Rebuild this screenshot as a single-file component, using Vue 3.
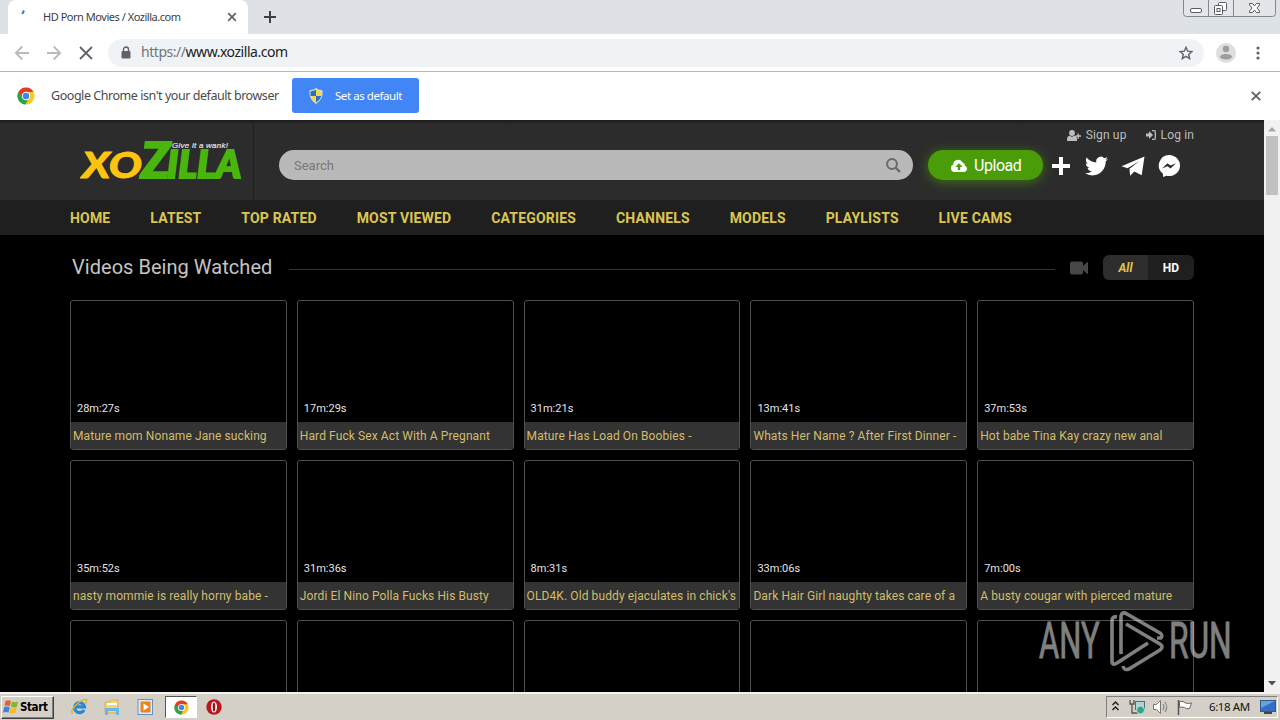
<script setup>
const nav = ['HOME', 'LATEST', 'TOP RATED', 'MOST VIEWED', 'CATEGORIES', 'CHANNELS', 'MODELS', 'PLAYLISTS', 'LIVE CAMS']
const videos = [
  { time: '28m:27s', title: 'Mature mom Noname Jane sucking' },
  { time: '17m:29s', title: 'Hard Fuck Sex Act With A Pregnant' },
  { time: '31m:21s', title: 'Mature Has Load On Boobies -' },
  { time: '13m:41s', title: 'Whats Her Name ? After First Dinner -' },
  { time: '37m:53s', title: 'Hot babe Tina Kay crazy new anal' },
  { time: '35m:52s', title: 'nasty mommie is really horny babe -' },
  { time: '31m:36s', title: 'Jordi El Nino Polla Fucks His Busty' },
  { time: '8m:31s', title: "OLD4K. Old buddy ejaculates in chick's" },
  { time: '33m:06s', title: 'Dark Hair Girl naughty takes care of a' },
  { time: '7m:00s', title: 'A busty cougar with pierced mature' },
  {}, {}, {}, {}, {},
]
</script>

<template>
  <div class="screen">
    <div class="strip">
      <div class="tab">
        <svg class="spin" width="16" height="16" viewBox="0 0 16 16"><path d="M6.300 6L8 2.500" stroke="#3b78d8" stroke-width="2" /></svg>
        <span class="tabtitle">HD Porn Movies / Xozilla.com</span>
        <svg class="tabx" width="10" height="10" viewBox="0 0 10 10"><path d="M1.2 1.2l7.6 7.6M8.8 1.2L1.2 8.8" stroke="#5f6368" stroke-width="1.7" /></svg>
      </div>
      <svg class="plus" width="12" height="12" viewBox="0 0 12 12"><path d="M6 0v12M0 6h12" stroke="#3c4043" stroke-width="2" /></svg>
      <svg class="winbtns" width="94" height="18" viewBox="0 0 94 18">
        <path d="M.5 -1V13.5Q.5 16.5 3.500 16.500H89.500Q92.500 16.500 92.500 13.500V-1M25.500 0V16.500M50.500 0V16.500" fill="#e3e5e9" stroke="#83878e" />
        <rect x="7.500" y="8.500" width="11" height="4" rx="1.500" fill="#fff" stroke="#555a64" />
        <rect x="35.500" y="2.500" width="8" height="8" rx="1" fill="#fff" stroke="#555a64" />
        <rect x="31.500" y="5.500" width="8" height="9" rx="1" fill="#fff" stroke="#555a64" />
        <rect x="34" y="8.500" width="3" height="3" fill="none" stroke="#555a64" />
        <path d="M66.500 3.500h3l2 2.500 2-2.500h3v1.500L74 8l2.500 3v1.500h-3l-2-2.500-2 2.500h-3V11L69 8l-2.500-3z" fill="#fff" stroke="#555a64" />
      </svg>
    </div>

    <div class="toolbar">
      <svg class="navicons" width="80" height="20" viewBox="0 0 80 20" fill="none" stroke-width="1.800">
        <path d="M15 10H2M8.300 3.500L1.800 10l6.500 6.500M33 10h13M39.700 3.500l6.500 6.500-6.500 6.500" stroke="#b8babd" />
        <path d="M66 4l12 12M78 4l-12 12" stroke="#5f6368" />
      </svg>
      <div class="omni">
        <svg width="10" height="13" viewBox="0 0 10 13"><rect x="0.500" y="5" width="9" height="7.500" rx="1" fill="#5f6368" /><path d="M2.500 5.500V3.500a2.500 2.500 0 0 1 5 0v2" fill="none" stroke="#5f6368" stroke-width="1.400" /></svg>
        <span class="url"><i>https://</i>www.xozilla.com</span>
        <svg class="star" width="14" height="14" viewBox="0 0 14 14"><path d="M7 1.300l1.700 3.900 4.200.4-3.200 2.800 1 4.200L7 10.400l-3.700 2.200 1-4.200L1.100 5.600l4.200-.4z" fill="none" stroke="#5f6368" stroke-width="1.400" /></svg>
      </div>
      <svg class="avatar" width="20" height="20" viewBox="0 0 20 20"><circle cx="10" cy="10" r="10" fill="#dedede" /><circle cx="10" cy="6" r="3.200" fill="#9d9d9d" /><ellipse cx="10" cy="13.800" rx="6" ry="2.800" fill="#9d9d9d" /></svg>
      <svg class="dots" width="4" height="14" viewBox="0 0 4 14" fill="#5f6368"><circle cx="2" cy="2" r="1.600" /><circle cx="2" cy="7" r="1.600" /><circle cx="2" cy="12" r="1.600" /></svg>
    </div>

    <div class="infobar">
      <svg width="18" height="18" viewBox="0 0 20 20"><circle cx="10" cy="10" r="9.500" fill="#f9c920" /><path d="M10 10L5.700 12.500 1.700 5.500A9.500 9.500 0 0 1 18.300 5.500H10z" fill="#e23b2e" /><path d="M1.700 5.300L5.900 12.300 10 14.500H12L9.400 19.500A9.500 9.500 0 0 1 1.700 5.300z" fill="#2ba24c" /><circle cx="10" cy="10" r="4.700" fill="#fff" /><circle cx="10" cy="10" r="3.600" fill="#4285e8" /></svg>
      <span class="infotext">Google Chrome isn't your default browser</span>
      <div class="setdef">
        <svg width="14" height="16" viewBox="0 0 14 16"><path d="M7 .5Q9.500 2.500 13 2.500 14 11 7 15.500 0 11 1 2.500 4.500 2.500 7 .5z" fill="#f5d84a" stroke="#c8dcf8" stroke-width="1" /><path d="M7 1.800V8H1.600Q1.200 5 1.800 3.300 5 3.200 7 1.800zM7 8h5.400Q11 12 7 14.500z" fill="#2a6ecb" /></svg>
        <span>Set as default</span>
      </div>
      <svg class="infox" width="10" height="10" viewBox="0 0 10 10"><path d="M.8.8l8.400 8.400M9.200.8L.8 9.200" stroke="#5f6368" stroke-width="1.900" /></svg>
    </div>

    <div class="viewport">
      <main class="page">
        <header class="head">
          <div class="logobox">
            <svg width="170" height="60" viewBox="0 0 170 60" class="logo">
              <g font-family="Lato, sans-serif" font-style="italic" font-weight="900">
                <text x="2" y="46.500" font-size="36" textLength="60" lengthAdjust="spacingAndGlyphs" fill="#ffc412" stroke="#ffc412" stroke-width=".8">XO</text>
                <text x="61" y="46.500" font-size="49" textLength="29" lengthAdjust="spacingAndGlyphs" fill="#49b50d" stroke="#49b50d" stroke-width="2">Z</text>
                <text x="87" y="46.500" font-size="37" textLength="74" lengthAdjust="spacingAndGlyphs" fill="#49b50d" stroke="#49b50d" stroke-width="2">ILLA</text>
              </g>
              <text x="92" y="17" font-family="Liberation Sans, sans-serif" font-style="italic" font-size="8" textLength="56" fill="#e2e2e2" stroke="#e2e2e2" stroke-width=".2">Give it a wank!</text>
            </svg>
          </div>
          <div class="search">
            <span>Search</span>
            <svg width="15" height="15" viewBox="0 0 15 15" fill="none" stroke="#686868"><circle cx="6" cy="6" r="4.900" stroke-width="2" /><path d="M9.700 9.700l4.300 4.300" stroke-width="2.300" /></svg>
          </div>
          <div class="right">
            <div class="account">
              <svg width="14" height="11" viewBox="0 0 14 11" fill="#bdbdbd"><circle cx="5" cy="3" r="2.900" /><path d="M0 11V9q0-3 3-3.200L5 7l2-1.200Q10 6 10 9v2zM10.500 3.500h1.400v1.800H14v1.400h-2.100v2h-1.400v-2h-2V5.300h2z" /></svg>
              <span class="signup">Sign up</span>
              <svg width="10" height="10" viewBox="0 0 10 10" fill="#bdbdbd"><path d="M0 3.500h3V1l4 4-4 4V6.500H0z" /><path d="M6 .7h2.300q1 0 1 1v6.600q0 1-1 1H6" fill="none" stroke="#bdbdbd" stroke-width="1.300" /></svg>
              <span class="login">Log in</span>
            </div>
            <div class="actions">
              <div class="upload">
                <svg width="16" height="13" viewBox="0 0 16 13"><path d="M4 13A3.800 3.800 0 0 1 2.200 5.700 5 5 0 0 1 11.600 3.500 3 3 0 0 1 13.900 6.800 3.200 3.200 0 0 1 12.900 13z" fill="#fff" /><path d="M8 4.200L4.300 8h2.500v3h2.400V8h2.500z" fill="#4a9c08" /></svg>
                <span>Upload</span>
              </div>
              <svg class="social" width="132" height="24" viewBox="0 0 132 24" fill="#fff">
                <path d="M8 4h4v7H19v4h-7v7h-4v-7H1v-4h7z" />
                <path transform="translate(34 1.500) scale(.96)" d="M23.950 4.570a10 10 0 0 1-2.820.77 4.960 4.960 0 0 0 2.160-2.720c-.95.550-2 .960-3.130 1.180a4.920 4.920 0 0 0-8.380 4.480C7.690 8.090 4.070 6.130 1.640 3.160a4.820 4.820 0 0 0-.67 2.480c0 1.710.870 3.210 2.190 4.100a4.900 4.900 0 0 1-2.230-.620v.06a4.920 4.920 0 0 0 3.950 4.830 5 5 0 0 1-2.210.080 4.940 4.940 0 0 0 4.600 3.420A9.870 9.870 0 0 1 0 19.540a13.990 13.990 0 0 0 7.550 2.210c9.050 0 14-7.500 14-13.980 0-.210 0-.420-.020-.630a9.940 9.940 0 0 0 2.460-2.550z" />
                <path d="M70.500 13.200L93.500 3.500l-2.800 18.800-7.400-3.800-4.200 4.200-.6-7L88.500 8 76.500 15.200z" />
                <path d="M118 2a11 10.500 0 1 1-2.600 20.700L112 24v-3.200A10.700 10.500 0 0 1 118 2z" />
                <path d="M111 15.500l5.500-5.300 3 2.300 5.500-2.300-5.500 5.300-3-2.300z" fill="#2c2c2c" />
              </svg>
            </div>
          </div>
        </header>
        <nav class="menu"><a v-for="n in nav" :key="n">{{ n }}</a></nav>
        <section class="heading">
          <h1>Videos Being Watched</h1>
          <div class="rule"></div>
          <svg width="18" height="14" viewBox="0 0 18 14" fill="#474747"><path d="M2 .5h9q2 0 2 2V5l5-4.500v13L13 9v2.500q0 2-2 2H2q-2 0-2-2v-9q0-2 2-2z" /></svg>
          <div class="toggle"><b class="all">All</b><b class="hd">HD</b></div>
        </section>
        <section class="grid">
          <article v-for="(v, i) in videos" :key="i" class="card">
            <div class="thumb"><span>{{ v.time }}</span></div>
            <div class="title">{{ v.title }}</div>
          </article>
        </section>
      </main>
      <div class="scroll">
        <svg width="16" height="16" viewBox="0 0 16 16"><path d="M4 11.500L8 7l4 4.500z" fill="#a3a3a3" /></svg>
        <div class="thumbbar"></div>
        <svg class="down" width="16" height="16" viewBox="0 0 16 16"><path d="M4 5l4 4.500L12 5z" fill="#505050" /></svg>
      </div>
      <div class="watermark">
        <svg width="200" height="70" viewBox="0 0 200 70">
          <g fill="#fff" stroke="#fff" stroke-width=".8" font-family="Roboto, sans-serif" font-size="50" font-weight="400">
            <text transform="translate(4 54) scale(.72 1)" textLength="84" lengthAdjust="spacingAndGlyphs">ANY</text>
            <text transform="translate(134 54) scale(.72 1)" textLength="87" lengthAdjust="spacingAndGlyphs">RUN</text>
          </g>
          <g fill="none" stroke="#fff" stroke-width="3.600" stroke-linejoin="round">
            <path d="M82 13q-5-1-5 4V57q0 5 5 2L113 39" />
            <path d="M86 50V12q1-5 6-2L125 29q3 2 1 5l-4 0" />
            <path d="M91 20L125 40q4 3 0 6L94 65q-5 2-6-3" />
          </g>
        </svg>
      </div>
    </div>

    <footer class="taskbar">
      <div class="start">
        <svg width="17" height="16" viewBox="0 0 17 16"><path d="M2.500 2Q5 .5 8 2L7 7Q4 6 1.500 7z" fill="#e8622b" /><path d="M9 2.500q3 1.300 6 0L13.800 8Q11 9 8 7.500z" fill="#7db72f" /><path d="M1.200 8Q4 7 6.800 8.300L5.600 13.500Q3 12.300 0 13.500z" fill="#3f83d6" /><path d="M7.800 8.700q3 1.200 5.800.2L12.300 14q-3 1-5.800-.300z" fill="#f4bd26" /></svg>
        <span>Start</span>
      </div>
      <svg class="ql" width="82" height="18" viewBox="0 0 82 18">
        <path d="M13 12A5 5 0 1 1 13.500 8.800H5" fill="none" stroke="#2589d6" stroke-width="3.200" /><path d="M1.500 16Q-1 13 5 7T15.500 1.500q1 1-1 4" fill="none" stroke="#e2b32b" stroke-width="1.500" />
        <path d="M34 4h5l1-2h7v13H34z" fill="#f1d576" stroke="#c5a84a" stroke-width=".7" /><path d="M36 6h10" stroke="#fff" stroke-width="2" /><path d="M34 17v-7h14v7h-3v-4h-8v4z" fill="#6cb6e6" />
        <rect x="67" y="1.500" width="14.500" height="15" fill="#dceaf7" stroke="#5b93ca" /><rect x="69.500" y="3.500" width="10" height="11" rx="1" fill="#ee8318" /><path d="M72.500 5.500v7l5.500-3.500z" fill="#fff" />
      </svg>
      <div class="active">
        <svg width="15" height="15" viewBox="0 0 20 20"><circle cx="10" cy="10" r="9.500" fill="#f9c920" /><path d="M10 10L5.700 12.500 1.700 5.500A9.500 9.500 0 0 1 18.300 5.500H10z" fill="#e23b2e" /><path d="M1.700 5.300L5.900 12.300 10 14.500H12L9.400 19.500A9.500 9.500 0 0 1 1.700 5.300z" fill="#2ba24c" /><circle cx="10" cy="10" r="4.700" fill="#fff" /><circle cx="10" cy="10" r="3.600" fill="#4285e8" /></svg>
      </div>
      <svg class="opera" width="16" height="16" viewBox="0 0 16 16"><circle cx="8" cy="8" r="7.700" fill="#b81820" /><ellipse cx="8" cy="8" rx="3" ry="5.500" fill="#fff" /><ellipse cx="8" cy="8" rx="1.300" ry="4.500" fill="#9a1018" /></svg>
      <div class="tray">
        <svg width="90" height="20" viewBox="0 0 90 20" fill="none">
          <path d="M5.500 8L8.500 5l3 3M5.500 13L8.500 10l3 3" stroke="#222" stroke-width="1.500" />
          <path d="M23 3v4h4V3M25 7v9h6" stroke="#555" stroke-width="1.300" /><rect x="28.500" y="4.500" width="9" height="8" fill="#a9d6d6" stroke="#5a6a70" /><circle cx="33.500" cy="13" r="4" fill="#38a18c" stroke="#bfe3dc" />
          <path d="M46.500 7.500h3l4-4v13l-4-4h-3z" fill="#fff" stroke="#777" /><path d="M56 7q2 3 0 6M58 5q3.500 5 0 10" stroke="#888" stroke-width="1.200" />
          <path d="M71.500 3v15" stroke="#555" stroke-width="1.500" /><path d="M72.500 4.500q4-1 6 1.500 3 1 6 0l-2 5.500q-3 1-5-1-3-1-5 0z" fill="#fff" stroke="#666" />
        </svg>
        <span class="clock">6:18 AM</span>
        <svg class="desk" width="16" height="14" viewBox="0 0 16 14"><rect x=".5" y=".5" width="15" height="11" fill="#2f6fc4" stroke="#315a8e" /><path d="M1 1h14L1 8z" fill="#66a1e2" /><path d="M4 13h8" stroke="#444" stroke-width="2" /></svg>
      </div>
    </footer>
  </div>
</template>

<style>
html, body { margin: 0; overflow: hidden; }
</style>
<style scoped>
.screen { width: 1280px; height: 720px; overflow: hidden; display: flex; flex-direction: column; background: #fff; font-family: "DejaVu Sans Condensed", "DejaVu Sans", sans-serif; }
.screen * { box-sizing: border-box; }
svg { display: block; flex: none; }
span { white-space: nowrap; }
.strip { height: 34px; flex: none; background: #dee1e6; display: flex; padding-left: 8px; }
.tab { width: 240px; height: 34px; background: #fff; border-radius: 8px 8px 0 0; display: flex; align-items: center; padding-left: 8px; }
.spin { margin-top: -2px; }
.tabtitle { font: 11px "Noto Sans", sans-serif; color: #3c4043; margin: -1px 0 0 11px; width: 184px; letter-spacing: -.47px; }
.plus { margin: 11px 0 0 16px; }
.winbtns { margin-left: auto; margin-right: 3px; }
.toolbar { height: 38px; flex: none; border-bottom: 1px solid #b3b7b6; display: flex; align-items: center; padding-left: 14px; }
.omni { margin-left: 14px; width: 1096px; height: 28px; border-radius: 14px; background: #f0f3f5; display: flex; align-items: center; padding-left: 13px; }
.url { margin: -2px 0 0 10px; font: 14px "Noto Sans", sans-serif; letter-spacing: -.46px; color: #202124; }
.url i { font-style: normal; color: #70757a; }
.star { margin-left: auto; margin-right: 11px; }
.avatar { margin-left: 12px; }
.dots { margin-left: 20px; }
.infobar { height: 48px; flex: none; display: flex; align-items: center; padding: 0 19px 1px 17px; }
.infotext { margin: -1px 0 0 16px; width: 241px; font: 12.500px "Noto Sans", sans-serif; letter-spacing: -.45px; color: #4a4a4a; }
.setdef { width: 127px; height: 35px; background: #4285f4; border-radius: 3px; color: #fff; display: flex; align-items: center; padding-left: 17px; font: 11.500px "Noto Sans", sans-serif; gap: 12px; letter-spacing: -.44px; }
.setdef span { margin-top: -1px; }
.infox { margin-left: auto; }
.viewport { height: 572px; flex: none; display: flex; position: relative; overflow: hidden; background: #000; }
.page { width: 1264px; height: 572px; overflow: hidden; font-family: Roboto, sans-serif; }
.head { height: 80px; background: linear-gradient(#191919, #2c2c2c 4px); display: flex; padding-left: 70px; }
.logobox { width: 184px; height: 80px; border-right: 1px solid #202020; padding: 11px 0 0 10px; }
.search { margin: 30px 0 0 25px; width: 634px; height: 30px; background: #b9b9b9; border-radius: 15px; display: flex; align-items: center; justify-content: space-between; padding: 0 12px 0 15px; font-size: 13px; color: #777; }
.right { width: 266px; margin-left: 15px; }
.account { height: 30px; display: flex; align-items: center; justify-content: flex-end; font-size: 12px; color: #bdbdbd; }
.signup { margin: 0 19px 0 5px; letter-spacing: .15px; }
.login { margin-left: 5px; letter-spacing: .15px; }
.actions { display: flex; }
.upload { width: 115px; height: 30px; border-radius: 15px; background: #4a9c08; box-shadow: 0 2px 12px #4a9c08aa; color: #fff; font-size: 16px; display: flex; align-items: center; padding-left: 23px; gap: 7px; letter-spacing: -.45px; }
.social { margin: 3px 0 0 8px; }
.menu { height: 35px; background: #1f1f1f; display: flex; gap: 39.800px; padding-left: 70px; line-height: 36px; font-size: 14px; font-weight: 700; color: #dbc653; white-space: nowrap; letter-spacing: .19px; }
.heading { height: 65px; display: flex; align-items: center; padding: 0 70px 0 72px; }
h1 { margin: -2px 0 0; width: 217px; font-size: 20px; font-weight: 400; color: #c4c4c4; white-space: nowrap; letter-spacing: .04px; }
.rule { width: 766px; height: 1px; background: #343434; margin: 4px 15px 0 0; }
.toggle { width: 91px; height: 25px; margin-left: 15px; border-radius: 6px; overflow: hidden; display: flex; font-size: 12px; line-height: 26px; text-align: center; }
.all { width: 45px; background: #2d2d2d; color: #e0c34c; font-style: italic; }
.hd { width: 46px; background: #1f1f1f; color: #fff; }
.grid { padding: 0 70px; display: grid; grid-template-columns: repeat(5, 1fr); gap: 10px; }
.card { height: 150px; border: 1px solid #4f4f4f; border-radius: 3px; overflow: hidden; min-width: 0; }
.thumb { height: 121px; padding: 101px 0 0 6px; font-size: 11px; line-height: 13px; color: #e4e4e4; letter-spacing: 0; }
.title { height: 27px; background: #333; padding-left: 2px; font-size: 12px; line-height: 29px; color: #d2bd68; white-space: nowrap; letter-spacing: .1px; }
.scroll { width: 16px; height: 572px; background: #f1f1f1; display: flex; flex-direction: column; }
.thumbbar { height: 59px; margin: 0 2px; background: #c1c1c1; }
.down { margin-top: auto; }
.watermark { position: absolute; left: 1035px; top: 484px; opacity: .5; }
.taskbar { height: 28px; flex: none; background: #d4d0c8; border-top: 2px solid #f5f3ee; display: flex; align-items: center; }
.start { width: 53px; height: 23px; margin-left: 1px; display: flex; align-items: center; border: 1px solid; border-color: #fff #404040 #404040 #fff; box-shadow: inset -1px -1px #808080; padding-left: 1px; font-size: 11.500px; font-weight: 700; color: #000; gap: 0; letter-spacing: -.4px; }
.ql { margin-left: 17px; }
.active { width: 32px; height: 22px; margin-left: 12px; background: #fff; border: 1px solid; border-color: #555 #fff #fff #555; display: flex; align-items: center; justify-content: center; }
.opera { margin-left: 9px; }
.tray { margin-left: auto; margin-right: 2px; width: 172px; height: 22px; border: 1px solid; border-color: #808080 #fff #fff #808080; display: flex; align-items: center; }
.clock { font: 11.500px "Noto Sans", sans-serif; color: #111; margin: -2px 0 0 12px; letter-spacing: -.4px; width: 51px; }
</style>
